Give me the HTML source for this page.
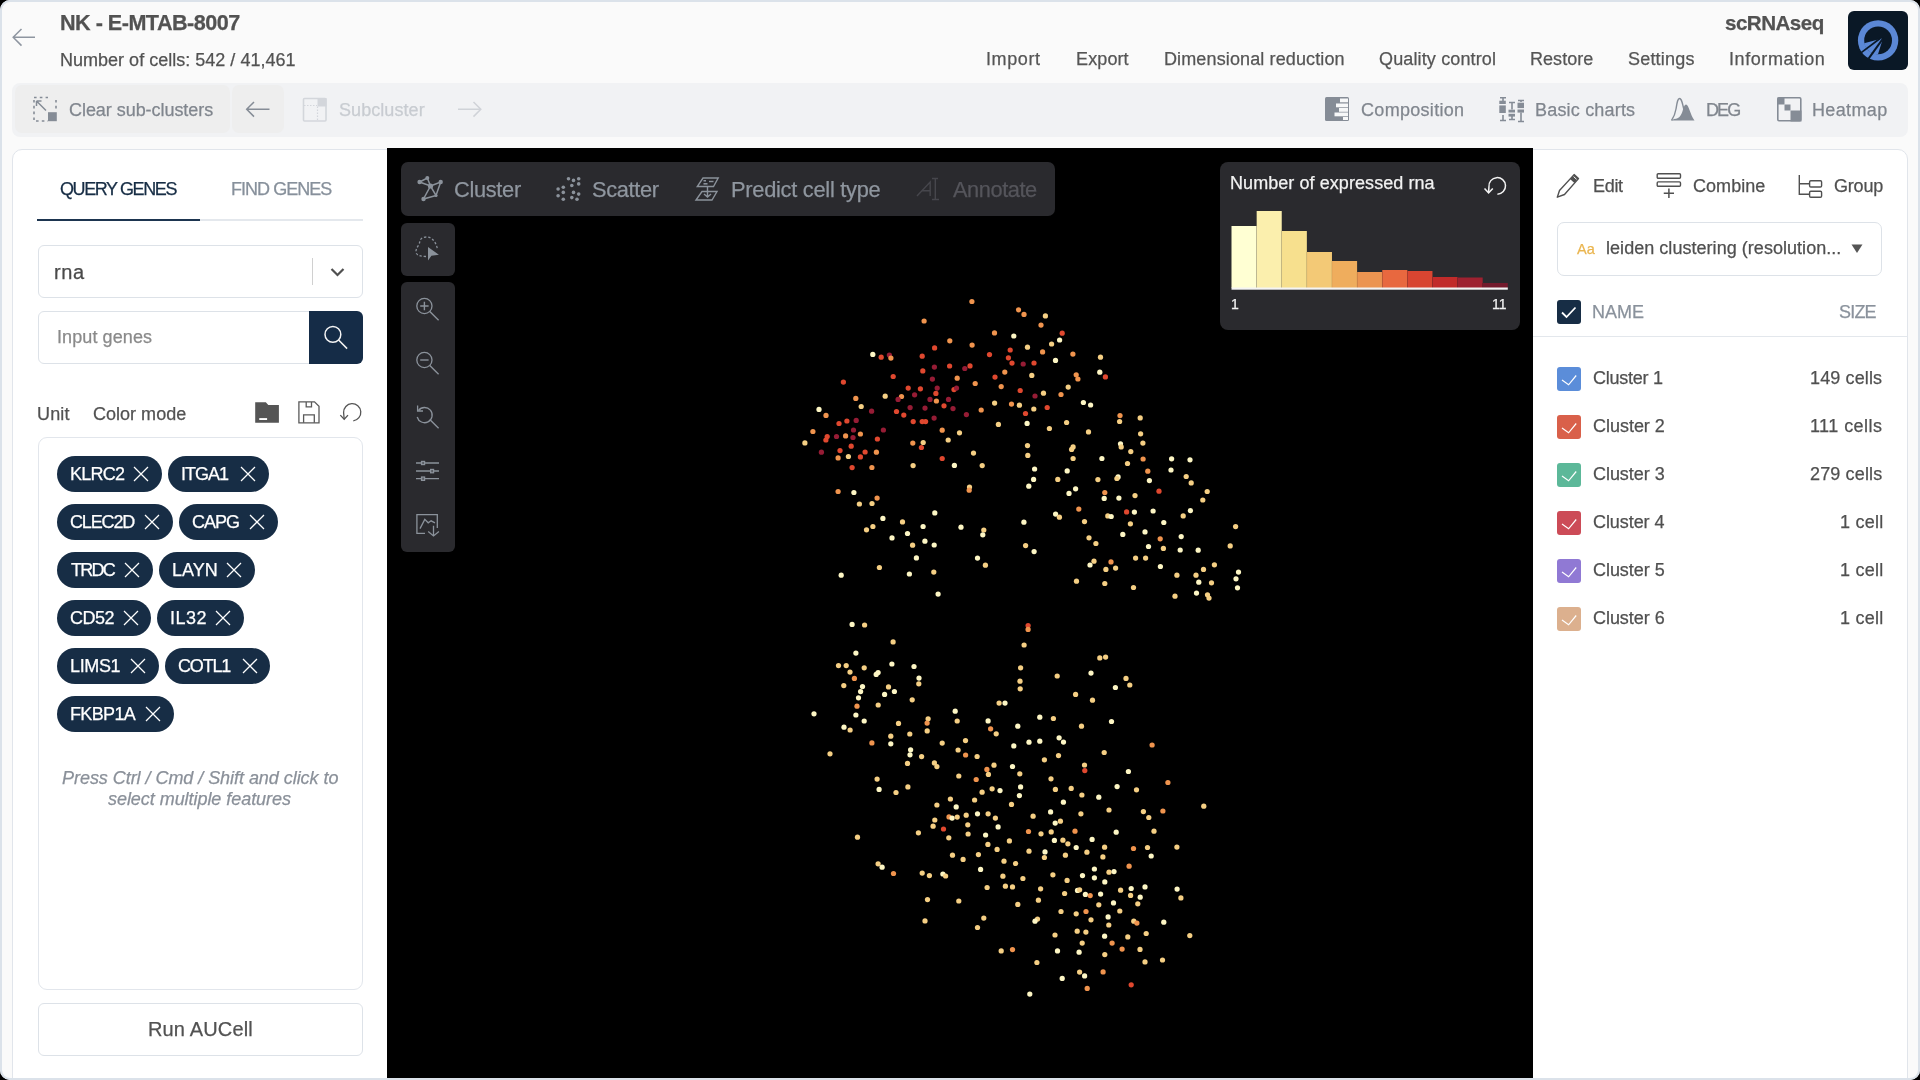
<!DOCTYPE html>
<html><head><meta charset="utf-8">
<style>
*{box-sizing:border-box;margin:0;padding:0}
html,body{width:1920px;height:1080px;overflow:hidden;background:#000}
body{font-family:"Liberation Sans",sans-serif;position:relative}
.abs{position:absolute}
.t{position:absolute;white-space:nowrap;line-height:1;will-change:transform;-webkit-text-stroke:0.25px currentColor}
svg{position:absolute;overflow:visible}
</style></head>
<body>
<div class="abs" style="left:0px;top:0px;width:1920px;height:1080px;background:#fafafa"></div>
<svg style="left:0px;top:0px;" width="60" height="80" viewBox="0 0 60 80"><path d="M35 37.3H13.5M21.5 29L13.2 37.3 21.5 45.6" fill="none" stroke="#8e95a0" stroke-width="1.5"/></svg>
<div class="t" style="left:59.50px;letter-spacing:-0.511px;top:11.82px;font-size:21.6px;color:#525252;font-weight:bold;font-style:normal;">NK - E-MTAB-8007</div>
<div class="t" style="left:60.16px;letter-spacing:0.013px;top:51.06px;font-size:18px;color:#525252;font-weight:normal;font-style:normal;">Number of cells: 542 / 41,461</div>
<div class="t" style="left:1725.28px;letter-spacing:-0.534px;top:12.56px;font-size:20.6px;color:#525252;font-weight:bold;font-style:normal;">scRNAseq</div>
<div class="t" style="left:986.18px;letter-spacing:0.594px;top:50.26px;font-size:18px;color:#555555;font-weight:normal;font-style:normal;">Import</div>
<div class="t" style="left:1075.56px;letter-spacing:0.120px;top:50.26px;font-size:18px;color:#555555;font-weight:normal;font-style:normal;">Export</div>
<div class="t" style="left:1163.56px;letter-spacing:0.125px;top:50.26px;font-size:18px;color:#555555;font-weight:normal;font-style:normal;">Dimensional reduction</div>
<div class="t" style="left:1379.19px;letter-spacing:0.140px;top:50.26px;font-size:18px;color:#555555;font-weight:normal;font-style:normal;">Quality control</div>
<div class="t" style="left:1530.06px;letter-spacing:0.042px;top:50.26px;font-size:18px;color:#555555;font-weight:normal;font-style:normal;">Restore</div>
<div class="t" style="left:1628.19px;letter-spacing:0.196px;top:50.26px;font-size:18px;color:#555555;font-weight:normal;font-style:normal;">Settings</div>
<div class="t" style="left:1728.88px;letter-spacing:0.579px;top:50.26px;font-size:18px;color:#555555;font-weight:normal;font-style:normal;">Information</div>
<div class="abs" style="left:1848px;top:10.5px;width:60px;height:59.8px;background:#0a1826;border-radius:6px"></div>
<svg style="left:1848px;top:10px;" width="60" height="60" viewBox="0 0 60 60"><circle cx="30.1" cy="30.4" r="20.2" fill="#5b88d6"/><circle cx="30.1" cy="30.4" r="13.9" fill="#0a1826"/><path d="M35 28.3L16.1 33.3A13.9 13.9 0 0 0 30 44.3Z" fill="#5b88d6"/><path d="M32 28.5L13.2 42.6" stroke="#0a1826" stroke-width="1.7"/><path d="M35.3 28.1L20.6 48.6" stroke="#0a1826" stroke-width="2"/></svg>
<div class="abs" style="left:12px;top:82.6px;width:1896px;height:54.20000000000002px;background:#f1f2f4;border-radius:8px"></div>
<div class="abs" style="left:15px;top:85px;width:215px;height:48px;background:#eeeeee;border-radius:7px"></div>
<div class="abs" style="left:232px;top:85px;width:52px;height:48px;background:#eeeeee;border-radius:7px"></div>
<svg style="left:33px;top:97px;" width="24" height="25" viewBox="0 0 24 25"><path d="M1 3V24M1 0.5H15M23 3V14M3 24H15" fill="none" stroke="#858c96" stroke-width="1.6" stroke-dasharray="2.6 3.2"/><rect x="15" y="15.2" width="8.8" height="9" fill="#858c96"/><path d="M3.5 4L13 13.5M3.5 4H8.5M3.5 4V9" fill="none" stroke="#858c96" stroke-width="1.5"/></svg>
<div class="t" style="left:69.00px;letter-spacing:-0.050px;top:100.66px;font-size:18px;color:#80868e;font-weight:normal;font-style:normal;">Clear sub-clusters</div>
<svg style="left:240px;top:95px;" width="40" height="30" viewBox="0 0 40 30"><path d="M29.5 14.3H7M14 7L6.7 14.3 14 21.6" fill="none" stroke="#858c96" stroke-width="1.5"/></svg>
<svg style="left:302px;top:97px;" width="26" height="25" viewBox="0 0 26 25"><rect x="1.5" y="1.5" width="22.5" height="22.5" rx="1" fill="none" stroke="#d3d6db" stroke-width="1.6"/><rect x="15.5" y="1" width="9" height="8.5" fill="#d3d6db"/><path d="M2 8.5H15M15.5 9.5V23" stroke="#d3d6db" stroke-width="1.2" stroke-dasharray="1.5 1.5"/></svg>
<div class="t" style="left:338.59px;letter-spacing:0.069px;top:100.66px;font-size:18px;color:#c8ccd1;font-weight:normal;font-style:normal;">Subcluster</div>
<svg style="left:450px;top:95px;" width="40" height="30" viewBox="0 0 40 30"><path d="M8 14.3H30.5M23.5 7L30.8 14.3 23.5 21.6" fill="none" stroke="#d0d3d8" stroke-width="1.5"/></svg>
<svg style="left:1325px;top:97px;" width="25" height="25" viewBox="0 0 25 25"><rect x="0" y="0" width="24" height="24" rx="1.5" fill="#858c96"/><rect x="15" y="1.5" width="8" height="3.8" fill="#f7f8f9"/><rect x="11" y="6.5" width="12" height="3.8" fill="#f7f8f9"/><rect x="14" y="11" width="9" height="3.8" fill="#f7f8f9"/><rect x="9.5" y="15.5" width="13.5" height="3.8" fill="#f7f8f9"/><rect x="18" y="20" width="5" height="3" fill="#f7f8f9"/></svg>
<div class="t" style="left:1361.10px;letter-spacing:0.308px;top:100.96px;font-size:18px;color:#80868e;font-weight:normal;font-style:normal;">Composition</div>
<svg style="left:1499px;top:96px;" width="26" height="27" viewBox="0 0 26 27"><g fill="#858c96" stroke="#858c96"><path d="M1 1.7H7M4 1.7V5.5M4 19V24.5M1 24.5H7M10 6.5H16M13 6.5V13.5M13 20V23.5M10 23.5H16M19 4.5H25M22 4.5V6M22 16.5V25.5M19 25.5H25" fill="none" stroke-width="1.6"/></g><rect x="0.3" y="4.7" width="6.5" height="3.3" fill="#858c96"/><rect x="0.3" y="9.4" width="6.5" height="7.6" fill="#858c96"/><rect x="9.5" y="13.7" width="6.5" height="2.8" fill="#858c96"/><rect x="9.5" y="17.8" width="6.5" height="2.8" fill="#858c96"/><rect x="18.5" y="6.7" width="6.5" height="5.4" fill="#858c96"/><rect x="18.5" y="13.5" width="6.5" height="3.1" fill="#858c96"/></svg>
<div class="t" style="left:1534.56px;letter-spacing:0.187px;top:100.96px;font-size:18px;color:#80868e;font-weight:normal;font-style:normal;">Basic charts</div>
<svg style="left:1671px;top:97px;" width="24" height="25" viewBox="0 0 24 25"><path d="M0.5 23.5C3 20 4 18 5 12C6 6 6.5 1.5 8.6 1.5C10.5 1.5 11.5 6 13 13" fill="none" stroke="#858c96" stroke-width="1.4"/><path d="M0.5 23.5H23.5C21 20 20 17 18.5 13C17.5 10 16.5 7.5 15 7.5C13.5 7.5 12.8 10.5 12 12.5C11 16 9.5 22 3 22Z" fill="#858c96"/></svg>
<div class="t" style="left:1706.06px;letter-spacing:-1.885px;top:100.96px;font-size:18px;color:#80868e;font-weight:normal;font-style:normal;">DEG</div>
<svg style="left:1777px;top:97px;" width="25" height="25" viewBox="0 0 25 25"><rect x="0.8" y="0.8" width="23" height="23" rx="1.2" fill="none" stroke="#858c96" stroke-width="1.6"/><rect x="0.5" y="0.5" width="7" height="7" fill="#858c96"/><rect x="7.5" y="7.5" width="6" height="6" fill="#858c96"/><rect x="13.5" y="13.5" width="11" height="11" fill="#858c96"/></svg>
<div class="t" style="left:1811.56px;letter-spacing:0.362px;top:100.96px;font-size:18px;color:#80868e;font-weight:normal;font-style:normal;">Heatmap</div>
<div class="abs" style="left:12px;top:149px;width:388px;height:941px;background:#fff;border:1px solid #e1e5eb;border-radius:10px"></div>
<div class="t" style="left:60.19px;letter-spacing:-1.399px;top:179.76px;font-size:18px;color:#172d45;font-weight:normal;font-style:normal;">QUERY GENES</div>
<div class="t" style="left:230.56px;letter-spacing:-0.970px;top:179.76px;font-size:18px;color:#87909b;font-weight:normal;font-style:normal;">FIND GENES</div>
<div class="abs" style="left:37px;top:219.2px;width:326px;height:1.6000000000000227px;background:#e4e8ed"></div>
<div class="abs" style="left:37px;top:218.8px;width:163px;height:2.0999999999999943px;background:#1d3550"></div>
<div class="abs" style="left:38px;top:245px;width:325px;height:53px;border:1px solid #dde2e8;border-radius:6px;background:#fff"></div>
<div class="t" style="left:53.60px;letter-spacing:0.550px;top:262.07px;font-size:20px;color:#4a4a4a;font-weight:normal;font-style:normal;">rna</div>
<div class="abs" style="left:312px;top:258px;width:1px;height:27px;background:#d0d0d0"></div>
<svg style="left:328px;top:264px;" width="20" height="16" viewBox="0 0 20 16"><path d="M3.5 5L9.5 11 15.5 5" fill="none" stroke="#505050" stroke-width="2.2"/></svg>
<div class="abs" style="left:38px;top:311px;width:282px;height:53px;border:1px solid #dde2e8;border-radius:6px;background:#fff"></div>
<div class="t" style="left:56.68px;letter-spacing:0.090px;top:328.36px;font-size:18px;color:#8a8a8a;font-weight:normal;font-style:normal;">Input genes</div>
<div class="abs" style="left:309px;top:311px;width:54px;height:53px;background:#152c47;border-radius:0 6px 6px 0"></div>
<svg style="left:320px;top:320px;" width="30" height="30" viewBox="0 0 30 30"><circle cx="12.9" cy="14.4" r="7.9" fill="none" stroke="#f4f4f4" stroke-width="1.5"/><path d="M18.6 20L27.1 28.6" stroke="#f4f4f4" stroke-width="1.5"/></svg>
<div class="t" style="left:36.65px;letter-spacing:0.130px;top:404.76px;font-size:18px;color:#525252;font-weight:normal;font-style:normal;">Unit</div>
<div class="t" style="left:93.10px;letter-spacing:0.017px;top:404.76px;font-size:18px;color:#525252;font-weight:normal;font-style:normal;">Color mode</div>
<svg style="left:248px;top:395px;" width="40" height="35" viewBox="0 0 40 35"><path d="M7.2 7.2H17.8L20.3 10H30.9V27.8H7.2Z" fill="#555"/><rect x="11.25" y="23.1" width="7.85" height="1.9" fill="#fff"/></svg>
<svg style="left:290px;top:395px;" width="40" height="35" viewBox="0 0 40 35"><path d="M8.9 6.9H24.5L29 11.3V27.8H8.9Z" fill="none" stroke="#5a5a5a" stroke-width="1.3"/><path d="M16.2 7V11.8H21.5V7M13.6 27.8V19.9H24.3V27.8" fill="none" stroke="#5a5a5a" stroke-width="1.3"/></svg>
<svg style="left:336px;top:395px;" width="30" height="35" viewBox="0 0 30 35"><path d="M17.3 25.8A8.6 8.6 0 1 0 7.6 17.5L8.2 24.2" fill="none" stroke="#555" stroke-width="1.3"/><path d="M4.3 20.1L8.2 24.3 12 20.1" fill="none" stroke="#555" stroke-width="1.3"/></svg>
<div class="abs" style="left:38px;top:437px;width:325px;height:553px;border:1px solid #e2e6ec;border-radius:9px"></div>
<div class="abs" style="left:57.1px;top:456.1px;width:104.70000000000002px;height:35.60000000000002px;background:#172d45;border-radius:18px"></div>
<div class="t" style="left:69.86px;letter-spacing:-0.777px;top:465.16px;font-size:18px;color:#ffffff;font-weight:normal;font-style:normal;">KLRC2</div>
<svg style="left:133.20000000000002px;top:466.0px;" width="16" height="16" viewBox="0 0 16 16"><path d="M1 1L15 15M15 1L1 15" stroke="#fff" stroke-width="1.25"/></svg>
<div class="abs" style="left:168px;top:456.1px;width:100.5px;height:35.60000000000002px;background:#172d45;border-radius:18px"></div>
<div class="t" style="left:180.58px;letter-spacing:-0.972px;top:465.16px;font-size:18px;color:#ffffff;font-weight:normal;font-style:normal;">ITGA1</div>
<svg style="left:239.9px;top:466.0px;" width="16" height="16" viewBox="0 0 16 16"><path d="M1 1L15 15M15 1L1 15" stroke="#fff" stroke-width="1.25"/></svg>
<div class="abs" style="left:57.1px;top:504.2px;width:115.80000000000001px;height:35.599999999999966px;background:#172d45;border-radius:18px"></div>
<div class="t" style="left:70.40px;letter-spacing:-1.140px;top:513.26px;font-size:18px;color:#ffffff;font-weight:normal;font-style:normal;">CLEC2D</div>
<svg style="left:144.3px;top:514.1px;" width="16" height="16" viewBox="0 0 16 16"><path d="M1 1L15 15M15 1L1 15" stroke="#fff" stroke-width="1.25"/></svg>
<div class="abs" style="left:179.1px;top:504.2px;width:98.50000000000003px;height:35.599999999999966px;background:#172d45;border-radius:18px"></div>
<div class="t" style="left:192.40px;letter-spacing:-1.027px;top:513.26px;font-size:18px;color:#ffffff;font-weight:normal;font-style:normal;">CAPG</div>
<svg style="left:249.0px;top:514.1px;" width="16" height="16" viewBox="0 0 16 16"><path d="M1 1L15 15M15 1L1 15" stroke="#fff" stroke-width="1.25"/></svg>
<div class="abs" style="left:57.1px;top:552.2px;width:95.70000000000002px;height:35.60000000000002px;background:#172d45;border-radius:18px"></div>
<div class="t" style="left:70.94px;letter-spacing:-1.720px;top:561.26px;font-size:18px;color:#ffffff;font-weight:normal;font-style:normal;">TRDC</div>
<svg style="left:124.20000000000002px;top:562.1px;" width="16" height="16" viewBox="0 0 16 16"><path d="M1 1L15 15M15 1L1 15" stroke="#fff" stroke-width="1.25"/></svg>
<div class="abs" style="left:159.3px;top:552.2px;width:95.6px;height:35.60000000000002px;background:#172d45;border-radius:18px"></div>
<div class="t" style="left:172.06px;letter-spacing:-0.017px;top:561.26px;font-size:18px;color:#ffffff;font-weight:normal;font-style:normal;">LAYN</div>
<svg style="left:226.3px;top:562.1px;" width="16" height="16" viewBox="0 0 16 16"><path d="M1 1L15 15M15 1L1 15" stroke="#fff" stroke-width="1.25"/></svg>
<div class="abs" style="left:57.1px;top:600.2px;width:94.4px;height:35.60000000000002px;background:#172d45;border-radius:18px"></div>
<div class="t" style="left:70.40px;letter-spacing:-0.530px;top:609.26px;font-size:18px;color:#ffffff;font-weight:normal;font-style:normal;">CD52</div>
<svg style="left:122.9px;top:610.1px;" width="16" height="16" viewBox="0 0 16 16"><path d="M1 1L15 15M15 1L1 15" stroke="#fff" stroke-width="1.25"/></svg>
<div class="abs" style="left:157.4px;top:600.2px;width:86.19999999999999px;height:35.60000000000002px;background:#172d45;border-radius:18px"></div>
<div class="t" style="left:169.98px;letter-spacing:0.503px;top:609.26px;font-size:18px;color:#ffffff;font-weight:normal;font-style:normal;">IL32</div>
<svg style="left:215.0px;top:610.1px;" width="16" height="16" viewBox="0 0 16 16"><path d="M1 1L15 15M15 1L1 15" stroke="#fff" stroke-width="1.25"/></svg>
<div class="abs" style="left:57.1px;top:648.2px;width:101.6px;height:35.60000000000002px;background:#172d45;border-radius:18px"></div>
<div class="t" style="left:69.86px;letter-spacing:-0.368px;top:657.26px;font-size:18px;color:#ffffff;font-weight:normal;font-style:normal;">LIMS1</div>
<svg style="left:130.1px;top:658.1px;" width="16" height="16" viewBox="0 0 16 16"><path d="M1 1L15 15M15 1L1 15" stroke="#fff" stroke-width="1.25"/></svg>
<div class="abs" style="left:165.1px;top:648.2px;width:105.29999999999998px;height:35.60000000000002px;background:#172d45;border-radius:18px"></div>
<div class="t" style="left:178.40px;letter-spacing:-1.162px;top:657.26px;font-size:18px;color:#ffffff;font-weight:normal;font-style:normal;">COTL1</div>
<svg style="left:241.79999999999998px;top:658.1px;" width="16" height="16" viewBox="0 0 16 16"><path d="M1 1L15 15M15 1L1 15" stroke="#fff" stroke-width="1.25"/></svg>
<div class="abs" style="left:57.1px;top:696.1px;width:116.70000000000002px;height:35.60000000000002px;background:#172d45;border-radius:18px"></div>
<div class="t" style="left:69.86px;letter-spacing:-0.658px;top:705.16px;font-size:18px;color:#ffffff;font-weight:normal;font-style:normal;">FKBP1A</div>
<svg style="left:145.20000000000002px;top:706.0px;" width="16" height="16" viewBox="0 0 16 16"><path d="M1 1L15 15M15 1L1 15" stroke="#fff" stroke-width="1.25"/></svg>
<div class="t" style="left:61.66px;letter-spacing:-0.045px;top:769.16px;font-size:18px;color:#8a9099;font-weight:normal;font-style:italic;">Press Ctrl / Cmd / Shift and click to</div>
<div class="t" style="left:108.41px;letter-spacing:-0.048px;top:789.96px;font-size:18px;color:#8a9099;font-weight:normal;font-style:italic;">select multiple features</div>
<div class="abs" style="left:38px;top:1002.5px;width:325px;height:53.0px;border:1px solid #dde2e8;border-radius:6px"></div>
<div class="t" style="left:148.20px;letter-spacing:0.144px;top:1019.47px;font-size:20px;color:#525252;font-weight:normal;font-style:normal;">Run AUCell</div>
<div class="abs" style="left:1520px;top:149px;width:388px;height:941px;background:#fff;border:1px solid #e1e5eb;border-radius:10px"></div>
<svg style="left:1556px;top:173px;" width="26" height="26" viewBox="0 0 26 26"><path d="M18.1 1.6L22.5 5.6 8.5 21.5 1.3 24.2 3.5 17.5Z" fill="none" stroke="#505050" stroke-width="1.4" stroke-linejoin="round"/><path d="M18.1 1.6L22.5 5.6 18.4 10 14 6Z" fill="#505050"/><path d="M17.6 3.6L20.6 6.3" stroke="#fff" stroke-width="1"/></svg>
<div class="t" style="left:1593.36px;letter-spacing:-0.310px;top:177.06px;font-size:18px;color:#505050;font-weight:normal;font-style:normal;">Edit</div>
<svg style="left:1656px;top:173px;" width="26" height="26" viewBox="0 0 26 26"><rect x="1.2" y="0.8" width="23.3" height="4.4" rx="1" fill="none" stroke="#505050" stroke-width="1.4"/><rect x="1.2" y="8.9" width="23.3" height="4.3" rx="1" fill="none" stroke="#505050" stroke-width="1.4"/><path d="M12.9 15.4V24.9M7.75 20.3H18" stroke="#505050" stroke-width="1.5"/></svg>
<div class="t" style="left:1692.50px;letter-spacing:0.052px;top:177.06px;font-size:18px;color:#505050;font-weight:normal;font-style:normal;">Combine</div>
<svg style="left:1798px;top:173px;" width="26" height="26" viewBox="0 0 26 26"><path d="M1.3 2V21.2H11.6M1.3 10.75H11.6" fill="none" stroke="#505050" stroke-width="1.4"/><rect x="11.6" y="7.8" width="12" height="6.2" rx="1.2" fill="none" stroke="#505050" stroke-width="1.4"/><rect x="11.6" y="18.3" width="12" height="5.9" rx="1.2" fill="none" stroke="#505050" stroke-width="1.4"/></svg>
<div class="t" style="left:1833.50px;letter-spacing:-0.205px;top:177.06px;font-size:18px;color:#505050;font-weight:normal;font-style:normal;">Group</div>
<div class="abs" style="left:1557px;top:222px;width:325px;height:54px;border:1px solid #dde2e8;border-radius:7px"></div>
<div class="t" style="left:1577.00px;top:242.43px;font-size:14.5px;color:#eab54f;font-weight:normal;font-style:normal;">Aa</div>
<div class="t" style="left:1605.83px;letter-spacing:0.039px;top:239.46px;font-size:18px;color:#505050;font-weight:normal;font-style:normal;">leiden clustering (resolution...</div>
<svg style="left:1850px;top:243px;" width="14" height="12" viewBox="0 0 14 12"><path d="M1.5 1.5H12.5L7 10Z" fill="#555"/></svg>
<div class="abs" style="left:1557px;top:300px;width:24px;height:24px;background:#172d45;border-radius:3px"></div>
<svg style="left:1557px;top:300px;" width="24" height="24" viewBox="0 0 24 24"><path d="M5 12.5L9.5 17 18.5 7.5" fill="none" stroke="#fff" stroke-width="1.8"/></svg>
<div class="t" style="left:1592.36px;letter-spacing:-0.023px;top:302.76px;font-size:18px;color:#8a929c;font-weight:normal;font-style:normal;">NAME</div>
<div class="t" style="left:1839.19px;letter-spacing:-0.810px;top:302.76px;font-size:18px;color:#8a929c;font-weight:normal;font-style:normal;">SIZE</div>
<div class="abs" style="left:1533px;top:336px;width:374px;height:1px;background:#e3e7ec"></div>
<div class="abs" style="left:1557px;top:367.4px;width:24px;height:24.0px;background:#5b8dd9;border-radius:3px"></div>
<svg style="left:1557px;top:367.4px;" width="24" height="24" viewBox="0 0 24 24"><path d="M5 13L11.6 17.8 19.2 8.5" fill="none" stroke="#fff" stroke-width="1.2"/></svg>
<div class="t" style="left:1592.80px;letter-spacing:-0.261px;top:368.76px;font-size:18px;color:#505050;font-weight:normal;font-style:normal;">Cluster 1</div>
<div class="t" style="left:1810.35px;letter-spacing:0.121px;top:368.76px;font-size:18px;color:#505050;font-weight:normal;font-style:normal;">149 cells</div>
<div class="abs" style="left:1557px;top:415.4px;width:24px;height:24.0px;background:#d9604a;border-radius:3px"></div>
<svg style="left:1557px;top:415.4px;" width="24" height="24" viewBox="0 0 24 24"><path d="M5 13L11.6 17.8 19.2 8.5" fill="none" stroke="#fff" stroke-width="1.2"/></svg>
<div class="t" style="left:1592.80px;letter-spacing:-0.025px;top:416.76px;font-size:18px;color:#505050;font-weight:normal;font-style:normal;">Cluster 2</div>
<div class="t" style="left:1810.35px;letter-spacing:0.447px;top:416.76px;font-size:18px;color:#505050;font-weight:normal;font-style:normal;">111 cells</div>
<div class="abs" style="left:1557px;top:463.4px;width:24px;height:24.0px;background:#5cb899;border-radius:3px"></div>
<svg style="left:1557px;top:463.4px;" width="24" height="24" viewBox="0 0 24 24"><path d="M5 13L11.6 17.8 19.2 8.5" fill="none" stroke="#fff" stroke-width="1.2"/></svg>
<div class="t" style="left:1592.80px;letter-spacing:-0.047px;top:464.76px;font-size:18px;color:#505050;font-weight:normal;font-style:normal;">Cluster 3</div>
<div class="t" style="left:1810.20px;letter-spacing:0.140px;top:464.76px;font-size:18px;color:#505050;font-weight:normal;font-style:normal;">279 cells</div>
<div class="abs" style="left:1557px;top:511.4px;width:24px;height:24.0px;background:#cc4b57;border-radius:3px"></div>
<svg style="left:1557px;top:511.4px;" width="24" height="24" viewBox="0 0 24 24"><path d="M5 13L11.6 17.8 19.2 8.5" fill="none" stroke="#fff" stroke-width="1.2"/></svg>
<div class="t" style="left:1592.80px;letter-spacing:-0.070px;top:512.76px;font-size:18px;color:#505050;font-weight:normal;font-style:normal;">Cluster 4</div>
<div class="t" style="left:1839.65px;letter-spacing:0.256px;top:512.76px;font-size:18px;color:#505050;font-weight:normal;font-style:normal;">1 cell</div>
<div class="abs" style="left:1557px;top:559.4px;width:24px;height:24.0px;background:#9079d4;border-radius:3px"></div>
<svg style="left:1557px;top:559.4px;" width="24" height="24" viewBox="0 0 24 24"><path d="M5 13L11.6 17.8 19.2 8.5" fill="none" stroke="#fff" stroke-width="1.2"/></svg>
<div class="t" style="left:1592.80px;letter-spacing:-0.047px;top:560.76px;font-size:18px;color:#505050;font-weight:normal;font-style:normal;">Cluster 5</div>
<div class="t" style="left:1839.65px;letter-spacing:0.256px;top:560.76px;font-size:18px;color:#505050;font-weight:normal;font-style:normal;">1 cell</div>
<div class="abs" style="left:1557px;top:607.4px;width:24px;height:24.0px;background:#dcb08e;border-radius:3px"></div>
<svg style="left:1557px;top:607.4px;" width="24" height="24" viewBox="0 0 24 24"><path d="M5 13L11.6 17.8 19.2 8.5" fill="none" stroke="#fff" stroke-width="1.2"/></svg>
<div class="t" style="left:1592.80px;letter-spacing:-0.047px;top:608.76px;font-size:18px;color:#505050;font-weight:normal;font-style:normal;">Cluster 6</div>
<div class="t" style="left:1839.65px;letter-spacing:0.256px;top:608.76px;font-size:18px;color:#505050;font-weight:normal;font-style:normal;">1 cell</div>
<div class="abs" style="left:387px;top:148px;width:1146px;height:930px;background:#000"></div>
<svg style="left:387px;top:148px;" width="1146" height="930" viewBox="0 0 1146 930"><circle cx="584.9" cy="153.5" r="2.62" fill="#f0944e"/><circle cx="631.5" cy="161.8" r="2.62" fill="#f0944e"/><circle cx="637.0" cy="166.4" r="2.62" fill="#f0944e"/><circle cx="537.1" cy="173.0" r="2.62" fill="#f0944e"/><circle cx="607.5" cy="184.9" r="2.62" fill="#f0944e"/><circle cx="626.8" cy="188.0" r="2.62" fill="#fdf6c4"/><circle cx="562.8" cy="192.8" r="2.62" fill="#f0944e"/><circle cx="585.1" cy="197.1" r="2.62" fill="#f0944e"/><circle cx="640.5" cy="199.2" r="2.62" fill="#f5cf84"/><circle cx="547.6" cy="199.9" r="2.62" fill="#e0482f"/><circle cx="623.2" cy="202.0" r="2.62" fill="#e0482f"/><circle cx="485.8" cy="206.4" r="2.62" fill="#fdf6c4"/><circle cx="494.2" cy="209.2" r="2.62" fill="#e0482f"/><circle cx="502.4" cy="207.0" r="2.62" fill="#961c35"/><circle cx="503.9" cy="210.1" r="2.62" fill="#f0944e"/><circle cx="535.2" cy="208.2" r="2.62" fill="#e0482f"/><circle cx="602.5" cy="206.6" r="2.62" fill="#e0482f"/><circle cx="621.4" cy="209.8" r="2.62" fill="#e0482f"/><circle cx="625.0" cy="215.1" r="2.62" fill="#e0482f"/><circle cx="636.2" cy="216.0" r="2.62" fill="#961c35"/><circle cx="547.4" cy="219.1" r="2.62" fill="#961c35"/><circle cx="562.6" cy="218.0" r="2.62" fill="#e0482f"/><circle cx="577.8" cy="220.5" r="2.62" fill="#961c35"/><circle cx="583.0" cy="217.9" r="2.62" fill="#e0482f"/><circle cx="535.8" cy="222.9" r="2.62" fill="#e0482f"/><circle cx="617.8" cy="224.1" r="2.62" fill="#f0944e"/><circle cx="506.2" cy="228.5" r="2.62" fill="#e0482f"/><circle cx="545.4" cy="231.1" r="2.62" fill="#961c35"/><circle cx="570.2" cy="230.2" r="2.62" fill="#f0944e"/><circle cx="608.0" cy="229.1" r="2.62" fill="#e0482f"/><circle cx="588.2" cy="235.5" r="2.62" fill="#f0944e"/><circle cx="614.2" cy="238.6" r="2.62" fill="#f0944e"/><circle cx="456.4" cy="234.1" r="2.62" fill="#e0482f"/><circle cx="521.2" cy="240.1" r="2.62" fill="#e0482f"/><circle cx="533.4" cy="240.8" r="2.62" fill="#e0482f"/><circle cx="550.2" cy="240.1" r="2.62" fill="#961c35"/><circle cx="567.0" cy="241.6" r="2.62" fill="#e0482f"/><circle cx="569.5" cy="240.1" r="2.62" fill="#961c35"/><circle cx="633.2" cy="242.5" r="2.62" fill="#e0482f"/><circle cx="527.6" cy="246.8" r="2.62" fill="#961c35"/><circle cx="548.9" cy="245.4" r="2.62" fill="#e0482f"/><circle cx="514.5" cy="248.5" r="2.62" fill="#f0944e"/><circle cx="511.1" cy="251.4" r="2.62" fill="#961c35"/><circle cx="498.2" cy="248.2" r="2.62" fill="#f5cf84"/><circle cx="468.8" cy="250.4" r="2.62" fill="#f0944e"/><circle cx="543.0" cy="251.4" r="2.62" fill="#961c35"/><circle cx="561.5" cy="251.4" r="2.62" fill="#961c35"/><circle cx="549.4" cy="253.0" r="2.62" fill="#f0944e"/><circle cx="607.6" cy="255.1" r="2.62" fill="#f5cf84"/><circle cx="624.5" cy="256.1" r="2.62" fill="#f0944e"/><circle cx="632.4" cy="257.2" r="2.62" fill="#f5cf84"/><circle cx="474.2" cy="258.5" r="2.62" fill="#f5cf84"/><circle cx="432.0" cy="261.4" r="2.62" fill="#fdf6c4"/><circle cx="439.0" cy="267.4" r="2.62" fill="#f0944e"/><circle cx="484.6" cy="263.2" r="2.62" fill="#961c35"/><circle cx="523.1" cy="259.6" r="2.62" fill="#961c35"/><circle cx="538.0" cy="260.1" r="2.62" fill="#961c35"/><circle cx="557.0" cy="257.8" r="2.62" fill="#e0482f"/><circle cx="566.0" cy="260.6" r="2.62" fill="#961c35"/><circle cx="594.2" cy="262.0" r="2.62" fill="#f0944e"/><circle cx="509.5" cy="263.5" r="2.62" fill="#e0482f"/><circle cx="516.8" cy="267.1" r="2.62" fill="#e0482f"/><circle cx="579.4" cy="266.6" r="2.62" fill="#961c35"/><circle cx="638.5" cy="265.5" r="2.62" fill="#e0482f"/><circle cx="459.9" cy="273.0" r="2.62" fill="#e0482f"/><circle cx="469.2" cy="272.4" r="2.62" fill="#961c35"/><circle cx="452.0" cy="275.5" r="2.62" fill="#e0482f"/><circle cx="526.2" cy="273.6" r="2.62" fill="#e0482f"/><circle cx="535.2" cy="273.6" r="2.62" fill="#e0482f"/><circle cx="538.6" cy="273.6" r="2.62" fill="#e0482f"/><circle cx="547.1" cy="270.1" r="2.62" fill="#961c35"/><circle cx="640.1" cy="275.4" r="2.62" fill="#fdf6c4"/><circle cx="611.4" cy="276.4" r="2.62" fill="#f5cf84"/><circle cx="654.0" cy="685.8" r="2.62" fill="#f5cf84"/><circle cx="664.2" cy="683.9" r="2.62" fill="#f5cf84"/><circle cx="688.0" cy="683.2" r="2.62" fill="#f0944e"/><circle cx="729.2" cy="684.2" r="2.62" fill="#fdf6c4"/><circle cx="767.0" cy="683.2" r="2.62" fill="#f5cf84"/><circle cx="667.4" cy="692.4" r="2.62" fill="#fdf6c4"/><circle cx="675.9" cy="692.2" r="2.62" fill="#f5cf84"/><circle cx="680.9" cy="695.8" r="2.62" fill="#f5cf84"/><circle cx="705.1" cy="691.4" r="2.62" fill="#fdf6c4"/><circle cx="689.2" cy="699.5" r="2.62" fill="#fdf6c4"/><circle cx="717.6" cy="699.2" r="2.62" fill="#f5cf84"/><circle cx="746.5" cy="700.5" r="2.62" fill="#f0944e"/><circle cx="760.5" cy="699.5" r="2.62" fill="#f5cf84"/><circle cx="789.9" cy="699.1" r="2.62" fill="#f5cf84"/><circle cx="658.0" cy="703.9" r="2.62" fill="#fdf6c4"/><circle cx="657.4" cy="709.5" r="2.62" fill="#f5cf84"/><circle cx="678.4" cy="707.2" r="2.62" fill="#f5cf84"/><circle cx="699.9" cy="704.2" r="2.62" fill="#f5cf84"/><circle cx="715.9" cy="708.9" r="2.62" fill="#f5cf84"/><circle cx="764.2" cy="708.0" r="2.62" fill="#fdf6c4"/><circle cx="742.1" cy="718.2" r="2.62" fill="#f0944e"/><circle cx="707.4" cy="721.0" r="2.62" fill="#fdf6c4"/><circle cx="722.0" cy="724.2" r="2.62" fill="#f5cf84"/><circle cx="727.0" cy="723.6" r="2.62" fill="#fdf6c4"/><circle cx="665.9" cy="726.8" r="2.62" fill="#f5cf84"/><circle cx="695.5" cy="727.6" r="2.62" fill="#fdf6c4"/><circle cx="707.4" cy="729.8" r="2.62" fill="#fdf6c4"/><circle cx="717.8" cy="733.9" r="2.62" fill="#fdf6c4"/><circle cx="680.1" cy="732.4" r="2.62" fill="#f5cf84"/><circle cx="653.6" cy="740.8" r="2.62" fill="#f5cf84"/><circle cx="690.5" cy="742.4" r="2.62" fill="#fdf6c4"/><circle cx="692.6" cy="741.8" r="2.62" fill="#f5cf84"/><circle cx="677.6" cy="745.5" r="2.62" fill="#f5cf84"/><circle cx="698.4" cy="746.4" r="2.62" fill="#fdf6c4"/><circle cx="703.2" cy="747.6" r="2.62" fill="#f0944e"/><circle cx="713.6" cy="746.1" r="2.62" fill="#fdf6c4"/><circle cx="733.6" cy="742.2" r="2.62" fill="#f5cf84"/><circle cx="744.2" cy="740.5" r="2.62" fill="#fdf6c4"/><circle cx="758.0" cy="738.9" r="2.62" fill="#fdf6c4"/><circle cx="790.1" cy="741.1" r="2.62" fill="#fdf6c4"/><circle cx="743.6" cy="747.4" r="2.62" fill="#f5cf84"/><circle cx="753.2" cy="749.2" r="2.62" fill="#fdf6c4"/><circle cx="793.9" cy="749.9" r="2.62" fill="#f5cf84"/><circle cx="651.4" cy="752.2" r="2.62" fill="#f5cf84"/><circle cx="711.8" cy="756.8" r="2.62" fill="#f5cf84"/><circle cx="726.5" cy="754.9" r="2.62" fill="#fdf6c4"/><circle cx="750.8" cy="755.8" r="2.62" fill="#f5cf84"/><circle cx="674.0" cy="763.5" r="2.62" fill="#f5cf84"/><circle cx="689.2" cy="765.8" r="2.62" fill="#f5cf84"/><circle cx="699.0" cy="763.5" r="2.62" fill="#f0944e"/><circle cx="732.8" cy="763.0" r="2.62" fill="#f5cf84"/><circle cx="721.1" cy="768.9" r="2.62" fill="#fdf6c4"/><circle cx="704.0" cy="771.8" r="2.62" fill="#f5cf84"/><circle cx="650.5" cy="771.1" r="2.62" fill="#f5cf84"/><circle cx="648.0" cy="773.2" r="2.62" fill="#fdf6c4"/><circle cx="746.8" cy="773.2" r="2.62" fill="#f5cf84"/><circle cx="749.9" cy="775.1" r="2.62" fill="#f0944e"/><circle cx="776.8" cy="774.2" r="2.62" fill="#fdf6c4"/><circle cx="721.8" cy="777.0" r="2.62" fill="#f5cf84"/><circle cx="690.2" cy="783.2" r="2.62" fill="#f5cf84"/><circle cx="698.9" cy="784.1" r="2.62" fill="#f5cf84"/><circle cx="668.0" cy="787.0" r="2.62" fill="#f5cf84"/><circle cx="717.6" cy="788.2" r="2.62" fill="#fdf6c4"/><circle cx="740.8" cy="788.9" r="2.62" fill="#f5cf84"/><circle cx="759.2" cy="785.5" r="2.62" fill="#f5cf84"/><circle cx="802.8" cy="787.6" r="2.62" fill="#f5cf84"/><circle cx="695.2" cy="795.1" r="2.62" fill="#f5cf84"/><circle cx="725.1" cy="795.1" r="2.62" fill="#f0944e"/><circle cx="735.1" cy="801.1" r="2.62" fill="#f0944e"/><circle cx="753.0" cy="801.4" r="2.62" fill="#f5cf84"/><circle cx="670.5" cy="802.9" r="2.62" fill="#fdf6c4"/><circle cx="692.1" cy="804.2" r="2.62" fill="#fdf6c4"/><circle cx="717.8" cy="806.6" r="2.62" fill="#f5cf84"/><circle cx="649.9" cy="814.5" r="2.62" fill="#f5cf84"/><circle cx="758.0" cy="813.9" r="2.62" fill="#f5cf84"/><circle cx="775.5" cy="812.0" r="2.62" fill="#f5cf84"/><circle cx="642.8" cy="846.1" r="2.62" fill="#fdf6c4"/><circle cx="692.6" cy="824.1" r="2.62" fill="#f5cf84"/><circle cx="697.6" cy="827.9" r="2.62" fill="#fdf6c4"/><circle cx="675.2" cy="830.4" r="2.62" fill="#fdf6c4"/><circle cx="716.1" cy="823.9" r="2.62" fill="#f0944e"/><circle cx="700.2" cy="840.4" r="2.62" fill="#f0944e"/><circle cx="744.2" cy="836.8" r="2.62" fill="#e0482f"/><circle cx="658.4" cy="167.9" r="2.62" fill="#f5cf84"/><circle cx="654.0" cy="177.1" r="2.62" fill="#f0944e"/><circle cx="675.2" cy="185.2" r="2.62" fill="#e0482f"/><circle cx="672.6" cy="192.0" r="2.62" fill="#fdf6c4"/><circle cx="664.6" cy="196.0" r="2.62" fill="#f5cf84"/><circle cx="655.6" cy="203.9" r="2.62" fill="#f0944e"/><circle cx="685.9" cy="206.1" r="2.62" fill="#f0944e"/><circle cx="713.5" cy="209.2" r="2.62" fill="#f5cf84"/><circle cx="668.5" cy="212.4" r="2.62" fill="#fdf6c4"/><circle cx="647.0" cy="215.0" r="2.62" fill="#e0482f"/><circle cx="644.8" cy="227.4" r="2.62" fill="#f5cf84"/><circle cx="689.2" cy="226.8" r="2.62" fill="#f0944e"/><circle cx="690.9" cy="231.0" r="2.62" fill="#f0944e"/><circle cx="712.8" cy="224.2" r="2.62" fill="#fdf6c4"/><circle cx="718.4" cy="228.9" r="2.62" fill="#e0482f"/><circle cx="681.2" cy="239.1" r="2.62" fill="#f5cf84"/><circle cx="648.0" cy="248.0" r="2.62" fill="#961c35"/><circle cx="656.5" cy="245.2" r="2.62" fill="#f5cf84"/><circle cx="674.0" cy="246.5" r="2.62" fill="#f0944e"/><circle cx="696.4" cy="254.5" r="2.62" fill="#fdf6c4"/><circle cx="703.6" cy="257.0" r="2.62" fill="#fdf6c4"/><circle cx="646.8" cy="261.0" r="2.62" fill="#f5cf84"/><circle cx="660.2" cy="259.5" r="2.62" fill="#e0482f"/><circle cx="733.0" cy="267.6" r="2.62" fill="#f0944e"/><circle cx="753.2" cy="269.9" r="2.62" fill="#f5cf84"/><circle cx="732.6" cy="273.5" r="2.62" fill="#f5cf84"/><circle cx="679.6" cy="274.5" r="2.62" fill="#f5cf84"/><circle cx="425.9" cy="283.5" r="2.62" fill="#f0944e"/><circle cx="466.5" cy="282.0" r="2.62" fill="#961c35"/><circle cx="496.4" cy="282.0" r="2.62" fill="#961c35"/><circle cx="440.2" cy="288.5" r="2.62" fill="#e0482f"/><circle cx="438.9" cy="292.0" r="2.62" fill="#e0482f"/><circle cx="449.5" cy="288.5" r="2.62" fill="#961c35"/><circle cx="458.6" cy="287.9" r="2.62" fill="#f0944e"/><circle cx="473.4" cy="286.0" r="2.62" fill="#f0944e"/><circle cx="466.0" cy="289.5" r="2.62" fill="#961c35"/><circle cx="490.4" cy="291.0" r="2.62" fill="#e0482f"/><circle cx="417.9" cy="294.9" r="2.62" fill="#f5cf84"/><circle cx="464.2" cy="298.2" r="2.62" fill="#e0482f"/><circle cx="453.0" cy="302.6" r="2.62" fill="#e0482f"/><circle cx="434.4" cy="304.2" r="2.62" fill="#961c35"/><circle cx="478.1" cy="304.0" r="2.62" fill="#e0482f"/><circle cx="489.4" cy="304.2" r="2.62" fill="#f0944e"/><circle cx="451.1" cy="309.9" r="2.62" fill="#f0944e"/><circle cx="461.4" cy="308.5" r="2.62" fill="#f5cf84"/><circle cx="473.4" cy="308.9" r="2.62" fill="#e0482f"/><circle cx="465.1" cy="319.6" r="2.62" fill="#e0482f"/><circle cx="484.9" cy="319.5" r="2.62" fill="#f0944e"/><circle cx="525.8" cy="295.1" r="2.62" fill="#f0944e"/><circle cx="536.2" cy="294.5" r="2.62" fill="#f5cf84"/><circle cx="534.4" cy="299.5" r="2.62" fill="#e0482f"/><circle cx="555.2" cy="282.2" r="2.62" fill="#f0944e"/><circle cx="572.5" cy="284.8" r="2.62" fill="#f5cf84"/><circle cx="561.2" cy="292.0" r="2.62" fill="#f5cf84"/><circle cx="586.5" cy="305.1" r="2.62" fill="#f5cf84"/><circle cx="555.2" cy="310.5" r="2.62" fill="#e0482f"/><circle cx="526.1" cy="317.6" r="2.62" fill="#f5cf84"/><circle cx="567.4" cy="317.4" r="2.62" fill="#fdf6c4"/><circle cx="595.2" cy="317.6" r="2.62" fill="#f5cf84"/><circle cx="640.5" cy="297.6" r="2.62" fill="#f5cf84"/><circle cx="640.8" cy="307.4" r="2.62" fill="#f5cf84"/><circle cx="451.1" cy="343.5" r="2.62" fill="#f0944e"/><circle cx="466.9" cy="344.5" r="2.62" fill="#fdf6c4"/><circle cx="490.1" cy="350.1" r="2.62" fill="#f0944e"/><circle cx="472.4" cy="356.0" r="2.62" fill="#f5cf84"/><circle cx="485.0" cy="355.5" r="2.62" fill="#f5cf84"/><circle cx="582.5" cy="339.1" r="2.62" fill="#f5cf84"/><circle cx="582.2" cy="342.2" r="2.62" fill="#f0944e"/><circle cx="641.8" cy="338.2" r="2.62" fill="#fdf6c4"/><circle cx="547.8" cy="364.9" r="2.62" fill="#fdf6c4"/><circle cx="495.9" cy="370.4" r="2.62" fill="#fdf6c4"/><circle cx="515.5" cy="373.9" r="2.62" fill="#f5cf84"/><circle cx="485.9" cy="378.5" r="2.62" fill="#f5cf84"/><circle cx="479.5" cy="381.8" r="2.62" fill="#f5cf84"/><circle cx="536.1" cy="378.5" r="2.62" fill="#fdf6c4"/><circle cx="520.5" cy="385.5" r="2.62" fill="#fdf6c4"/><circle cx="505.0" cy="389.9" r="2.62" fill="#fdf6c4"/><circle cx="537.9" cy="393.2" r="2.62" fill="#fdf6c4"/><circle cx="525.6" cy="397.2" r="2.62" fill="#f5cf84"/><circle cx="547.2" cy="397.0" r="2.62" fill="#fdf6c4"/><circle cx="574.0" cy="379.2" r="2.62" fill="#fdf6c4"/><circle cx="596.8" cy="382.0" r="2.62" fill="#f5cf84"/><circle cx="595.8" cy="386.8" r="2.62" fill="#fdf6c4"/><circle cx="636.9" cy="374.2" r="2.62" fill="#fdf6c4"/><circle cx="638.6" cy="397.6" r="2.62" fill="#f5cf84"/><circle cx="529.4" cy="409.9" r="2.62" fill="#fdf6c4"/><circle cx="590.5" cy="410.1" r="2.62" fill="#fdf6c4"/><circle cx="662.4" cy="280.5" r="2.62" fill="#f5cf84"/><circle cx="701.5" cy="283.9" r="2.62" fill="#f5cf84"/><circle cx="753.6" cy="285.8" r="2.62" fill="#f5cf84"/><circle cx="755.9" cy="295.1" r="2.62" fill="#f5cf84"/><circle cx="733.5" cy="295.8" r="2.62" fill="#fdf6c4"/><circle cx="734.2" cy="298.9" r="2.62" fill="#f5cf84"/><circle cx="686.1" cy="298.9" r="2.62" fill="#f5cf84"/><circle cx="684.6" cy="301.4" r="2.62" fill="#f5cf84"/><circle cx="743.8" cy="303.6" r="2.62" fill="#f5cf84"/><circle cx="686.1" cy="310.5" r="2.62" fill="#f5cf84"/><circle cx="714.9" cy="310.5" r="2.62" fill="#fdf6c4"/><circle cx="756.1" cy="311.0" r="2.62" fill="#f0944e"/><circle cx="740.5" cy="315.5" r="2.62" fill="#f5cf84"/><circle cx="784.6" cy="310.8" r="2.62" fill="#fdf6c4"/><circle cx="803.0" cy="311.8" r="2.62" fill="#fdf6c4"/><circle cx="647.6" cy="321.0" r="2.62" fill="#fdf6c4"/><circle cx="680.2" cy="322.9" r="2.62" fill="#fdf6c4"/><circle cx="760.8" cy="323.2" r="2.62" fill="#f0944e"/><circle cx="784.0" cy="322.0" r="2.62" fill="#fdf6c4"/><circle cx="646.6" cy="331.4" r="2.62" fill="#fdf6c4"/><circle cx="670.8" cy="331.4" r="2.62" fill="#f5cf84"/><circle cx="710.9" cy="331.6" r="2.62" fill="#f5cf84"/><circle cx="731.1" cy="328.9" r="2.62" fill="#fdf6c4"/><circle cx="729.9" cy="330.5" r="2.62" fill="#f5cf84"/><circle cx="762.4" cy="332.6" r="2.62" fill="#fdf6c4"/><circle cx="799.2" cy="328.5" r="2.62" fill="#f5cf84"/><circle cx="804.2" cy="334.9" r="2.62" fill="#f5cf84"/><circle cx="688.6" cy="340.8" r="2.62" fill="#fdf6c4"/><circle cx="682.0" cy="345.4" r="2.62" fill="#fdf6c4"/><circle cx="717.8" cy="344.5" r="2.62" fill="#f0944e"/><circle cx="717.2" cy="350.4" r="2.62" fill="#fdf6c4"/><circle cx="731.9" cy="350.1" r="2.62" fill="#fdf6c4"/><circle cx="748.0" cy="347.6" r="2.62" fill="#f5cf84"/><circle cx="772.0" cy="343.2" r="2.62" fill="#e0482f"/><circle cx="820.2" cy="343.5" r="2.62" fill="#f5cf84"/><circle cx="815.8" cy="352.0" r="2.62" fill="#f5cf84"/><circle cx="691.8" cy="361.1" r="2.62" fill="#f0944e"/><circle cx="668.6" cy="366.1" r="2.62" fill="#fdf6c4"/><circle cx="672.4" cy="369.2" r="2.62" fill="#f5cf84"/><circle cx="739.6" cy="363.9" r="2.62" fill="#e0482f"/><circle cx="747.4" cy="364.1" r="2.62" fill="#fdf6c4"/><circle cx="766.1" cy="363.0" r="2.62" fill="#fdf6c4"/><circle cx="720.8" cy="367.9" r="2.62" fill="#f5cf84"/><circle cx="724.2" cy="368.5" r="2.62" fill="#fdf6c4"/><circle cx="803.4" cy="362.6" r="2.62" fill="#fdf6c4"/><circle cx="796.2" cy="367.9" r="2.62" fill="#f5cf84"/><circle cx="697.5" cy="373.6" r="2.62" fill="#f5cf84"/><circle cx="743.4" cy="375.8" r="2.62" fill="#f5cf84"/><circle cx="776.8" cy="374.5" r="2.62" fill="#fdf6c4"/><circle cx="848.6" cy="378.6" r="2.62" fill="#f5cf84"/><circle cx="735.8" cy="386.4" r="2.62" fill="#fdf6c4"/><circle cx="758.0" cy="383.9" r="2.62" fill="#fdf6c4"/><circle cx="794.2" cy="388.6" r="2.62" fill="#fdf6c4"/><circle cx="773.2" cy="390.8" r="2.62" fill="#f0944e"/><circle cx="702.0" cy="389.8" r="2.62" fill="#f5cf84"/><circle cx="708.9" cy="395.5" r="2.62" fill="#f5cf84"/><circle cx="647.1" cy="403.6" r="2.62" fill="#fdf6c4"/><circle cx="761.5" cy="398.5" r="2.62" fill="#fdf6c4"/><circle cx="776.4" cy="400.4" r="2.62" fill="#f5cf84"/><circle cx="793.2" cy="402.0" r="2.62" fill="#fdf6c4"/><circle cx="811.2" cy="402.2" r="2.62" fill="#fdf6c4"/><circle cx="843.2" cy="397.9" r="2.62" fill="#f5cf84"/><circle cx="748.6" cy="410.1" r="2.62" fill="#f5cf84"/><circle cx="758.6" cy="410.1" r="2.62" fill="#f5cf84"/><circle cx="492.4" cy="419.5" r="2.62" fill="#f5cf84"/><circle cx="454.2" cy="427.2" r="2.62" fill="#fdf6c4"/><circle cx="522.4" cy="426.0" r="2.62" fill="#fdf6c4"/><circle cx="546.8" cy="424.1" r="2.62" fill="#f5cf84"/><circle cx="598.4" cy="417.2" r="2.62" fill="#f5cf84"/><circle cx="551.1" cy="446.1" r="2.62" fill="#fdf6c4"/><circle cx="465.1" cy="476.4" r="2.62" fill="#fdf6c4"/><circle cx="477.6" cy="477.0" r="2.62" fill="#f5cf84"/><circle cx="641.1" cy="477.6" r="2.62" fill="#e0482f"/><circle cx="641.1" cy="481.4" r="2.62" fill="#f0944e"/><circle cx="506.1" cy="493.9" r="2.62" fill="#f5cf84"/><circle cx="468.9" cy="505.1" r="2.62" fill="#fdf6c4"/><circle cx="637.1" cy="497.0" r="2.62" fill="#f5cf84"/><circle cx="451.5" cy="517.6" r="2.62" fill="#f5cf84"/><circle cx="459.2" cy="517.6" r="2.62" fill="#f5cf84"/><circle cx="463.0" cy="524.1" r="2.62" fill="#f5cf84"/><circle cx="477.2" cy="519.8" r="2.62" fill="#f5cf84"/><circle cx="467.4" cy="530.4" r="2.62" fill="#f0944e"/><circle cx="504.9" cy="516.0" r="2.62" fill="#fdf6c4"/><circle cx="527.0" cy="518.5" r="2.62" fill="#fdf6c4"/><circle cx="491.1" cy="524.5" r="2.62" fill="#fdf6c4"/><circle cx="489.2" cy="526.4" r="2.62" fill="#fdf6c4"/><circle cx="532.0" cy="530.1" r="2.62" fill="#fdf6c4"/><circle cx="531.8" cy="535.8" r="2.62" fill="#f5cf84"/><circle cx="633.6" cy="519.8" r="2.62" fill="#f5cf84"/><circle cx="633.0" cy="533.2" r="2.62" fill="#f5cf84"/><circle cx="633.2" cy="540.8" r="2.62" fill="#f5cf84"/><circle cx="456.8" cy="537.6" r="2.62" fill="#f5cf84"/><circle cx="475.5" cy="538.6" r="2.62" fill="#fdf6c4"/><circle cx="473.6" cy="543.6" r="2.62" fill="#fdf6c4"/><circle cx="501.5" cy="538.9" r="2.62" fill="#f5cf84"/><circle cx="507.4" cy="543.5" r="2.62" fill="#fdf6c4"/><circle cx="497.6" cy="546.4" r="2.62" fill="#fdf6c4"/><circle cx="703.0" cy="417.0" r="2.62" fill="#fdf6c4"/><circle cx="707.0" cy="413.2" r="2.62" fill="#f5cf84"/><circle cx="724.0" cy="413.9" r="2.62" fill="#f0944e"/><circle cx="718.9" cy="421.4" r="2.62" fill="#f5cf84"/><circle cx="728.6" cy="420.1" r="2.62" fill="#f5cf84"/><circle cx="689.5" cy="433.2" r="2.62" fill="#f5cf84"/><circle cx="717.8" cy="435.5" r="2.62" fill="#f5cf84"/><circle cx="746.5" cy="439.5" r="2.62" fill="#f5cf84"/><circle cx="773.4" cy="418.5" r="2.62" fill="#fdf6c4"/><circle cx="789.9" cy="427.2" r="2.62" fill="#f5cf84"/><circle cx="809.0" cy="427.2" r="2.62" fill="#f5cf84"/><circle cx="816.5" cy="421.4" r="2.62" fill="#f5cf84"/><circle cx="827.4" cy="416.8" r="2.62" fill="#f5cf84"/><circle cx="851.5" cy="424.1" r="2.62" fill="#fdf6c4"/><circle cx="849.0" cy="430.8" r="2.62" fill="#fdf6c4"/><circle cx="850.5" cy="439.8" r="2.62" fill="#fdf6c4"/><circle cx="811.8" cy="434.2" r="2.62" fill="#fdf6c4"/><circle cx="824.5" cy="434.8" r="2.62" fill="#f5cf84"/><circle cx="788.0" cy="448.2" r="2.62" fill="#f5cf84"/><circle cx="809.5" cy="445.1" r="2.62" fill="#fdf6c4"/><circle cx="820.5" cy="446.8" r="2.62" fill="#f5cf84"/><circle cx="822.0" cy="450.1" r="2.62" fill="#f5cf84"/><circle cx="712.8" cy="509.9" r="2.62" fill="#f5cf84"/><circle cx="718.6" cy="509.1" r="2.62" fill="#f5cf84"/><circle cx="670.2" cy="528.0" r="2.62" fill="#f5cf84"/><circle cx="704.0" cy="525.1" r="2.62" fill="#fdf6c4"/><circle cx="739.0" cy="530.4" r="2.62" fill="#f5cf84"/><circle cx="742.8" cy="537.0" r="2.62" fill="#f5cf84"/><circle cx="728.4" cy="539.5" r="2.62" fill="#fdf6c4"/><circle cx="688.6" cy="546.4" r="2.62" fill="#f5cf84"/><circle cx="471.5" cy="549.8" r="2.62" fill="#fdf6c4"/><circle cx="525.2" cy="551.8" r="2.62" fill="#f5cf84"/><circle cx="470.0" cy="558.2" r="2.62" fill="#f0944e"/><circle cx="491.2" cy="557.0" r="2.62" fill="#f5cf84"/><circle cx="427.0" cy="565.8" r="2.62" fill="#fdf6c4"/><circle cx="468.9" cy="567.0" r="2.62" fill="#fdf6c4"/><circle cx="477.2" cy="573.0" r="2.62" fill="#fdf6c4"/><circle cx="457.0" cy="579.2" r="2.62" fill="#fdf6c4"/><circle cx="463.1" cy="582.0" r="2.62" fill="#f5cf84"/><circle cx="511.5" cy="575.4" r="2.62" fill="#f5cf84"/><circle cx="503.8" cy="588.2" r="2.62" fill="#f5cf84"/><circle cx="522.8" cy="586.0" r="2.62" fill="#f5cf84"/><circle cx="484.9" cy="594.9" r="2.62" fill="#f0944e"/><circle cx="503.8" cy="595.8" r="2.62" fill="#fdf6c4"/><circle cx="541.1" cy="570.8" r="2.62" fill="#f5cf84"/><circle cx="540.1" cy="575.1" r="2.62" fill="#f0944e"/><circle cx="540.2" cy="582.9" r="2.62" fill="#f5cf84"/><circle cx="568.2" cy="563.2" r="2.62" fill="#fdf6c4"/><circle cx="570.2" cy="573.0" r="2.62" fill="#f5cf84"/><circle cx="612.1" cy="555.1" r="2.62" fill="#f5cf84"/><circle cx="618.0" cy="555.1" r="2.62" fill="#fdf6c4"/><circle cx="601.1" cy="572.9" r="2.62" fill="#fdf6c4"/><circle cx="603.6" cy="580.8" r="2.62" fill="#f0944e"/><circle cx="609.2" cy="585.8" r="2.62" fill="#f5cf84"/><circle cx="630.8" cy="578.2" r="2.62" fill="#fdf6c4"/><circle cx="555.2" cy="595.1" r="2.62" fill="#f5cf84"/><circle cx="578.5" cy="592.6" r="2.62" fill="#f5cf84"/><circle cx="571.1" cy="602.0" r="2.62" fill="#f5cf84"/><circle cx="578.6" cy="607.0" r="2.62" fill="#f0944e"/><circle cx="590.1" cy="608.5" r="2.62" fill="#f5cf84"/><circle cx="626.8" cy="597.9" r="2.62" fill="#fdf6c4"/><circle cx="642.0" cy="594.2" r="2.62" fill="#fdf6c4"/><circle cx="523.6" cy="601.8" r="2.62" fill="#fdf6c4"/><circle cx="523.0" cy="606.8" r="2.62" fill="#fdf6c4"/><circle cx="534.6" cy="608.6" r="2.62" fill="#f5cf84"/><circle cx="520.5" cy="615.4" r="2.62" fill="#f5cf84"/><circle cx="547.4" cy="614.9" r="2.62" fill="#f5cf84"/><circle cx="549.9" cy="618.6" r="2.62" fill="#f5cf84"/><circle cx="443.0" cy="605.8" r="2.62" fill="#f5cf84"/><circle cx="607.0" cy="617.2" r="2.62" fill="#f5cf84"/><circle cx="599.9" cy="621.4" r="2.62" fill="#f0944e"/><circle cx="601.4" cy="626.4" r="2.62" fill="#f5cf84"/><circle cx="625.5" cy="618.5" r="2.62" fill="#fdf6c4"/><circle cx="632.8" cy="625.8" r="2.62" fill="#f5cf84"/><circle cx="571.8" cy="628.0" r="2.62" fill="#f5cf84"/><circle cx="589.2" cy="631.5" r="2.62" fill="#f0944e"/><circle cx="490.1" cy="631.1" r="2.62" fill="#f5cf84"/><circle cx="492.1" cy="641.4" r="2.62" fill="#fdf6c4"/><circle cx="509.0" cy="644.5" r="2.62" fill="#f5cf84"/><circle cx="520.9" cy="638.9" r="2.62" fill="#f5cf84"/><circle cx="605.1" cy="640.8" r="2.62" fill="#f5cf84"/><circle cx="595.1" cy="644.2" r="2.62" fill="#f5cf84"/><circle cx="613.0" cy="642.6" r="2.62" fill="#fdf6c4"/><circle cx="633.6" cy="638.9" r="2.62" fill="#fdf6c4"/><circle cx="632.4" cy="647.6" r="2.62" fill="#fdf6c4"/><circle cx="563.4" cy="651.0" r="2.62" fill="#f5cf84"/><circle cx="587.6" cy="652.0" r="2.62" fill="#f5cf84"/><circle cx="549.9" cy="657.0" r="2.62" fill="#f5cf84"/><circle cx="569.2" cy="658.9" r="2.62" fill="#fdf6c4"/><circle cx="624.5" cy="656.4" r="2.62" fill="#f5cf84"/><circle cx="562.0" cy="668.9" r="2.62" fill="#f0944e"/><circle cx="565.1" cy="670.1" r="2.62" fill="#fdf6c4"/><circle cx="570.2" cy="669.1" r="2.62" fill="#f5cf84"/><circle cx="579.2" cy="667.2" r="2.62" fill="#f5cf84"/><circle cx="590.5" cy="665.8" r="2.62" fill="#fdf6c4"/><circle cx="601.1" cy="665.8" r="2.62" fill="#f5cf84"/><circle cx="608.4" cy="670.1" r="2.62" fill="#f5cf84"/><circle cx="547.8" cy="672.0" r="2.62" fill="#f5cf84"/><circle cx="546.1" cy="678.2" r="2.62" fill="#f5cf84"/><circle cx="580.8" cy="676.8" r="2.62" fill="#f5cf84"/><circle cx="611.1" cy="678.9" r="2.62" fill="#fdf6c4"/><circle cx="556.5" cy="681.0" r="2.62" fill="#e0482f"/><circle cx="705.5" cy="552.2" r="2.62" fill="#f5cf84"/><circle cx="652.8" cy="569.2" r="2.62" fill="#fdf6c4"/><circle cx="666.4" cy="570.5" r="2.62" fill="#f5cf84"/><circle cx="694.5" cy="578.2" r="2.62" fill="#f5cf84"/><circle cx="724.5" cy="573.5" r="2.62" fill="#fdf6c4"/><circle cx="672.1" cy="589.8" r="2.62" fill="#fdf6c4"/><circle cx="676.5" cy="594.1" r="2.62" fill="#fdf6c4"/><circle cx="652.8" cy="593.2" r="2.62" fill="#fdf6c4"/><circle cx="765.1" cy="597.0" r="2.62" fill="#f0944e"/><circle cx="717.2" cy="604.5" r="2.62" fill="#f5cf84"/><circle cx="671.5" cy="607.6" r="2.62" fill="#f5cf84"/><circle cx="657.4" cy="611.8" r="2.62" fill="#f5cf84"/><circle cx="697.5" cy="617.0" r="2.62" fill="#f5cf84"/><circle cx="697.8" cy="622.6" r="2.62" fill="#e0482f"/><circle cx="741.4" cy="623.5" r="2.62" fill="#fdf6c4"/><circle cx="664.0" cy="630.8" r="2.62" fill="#f5cf84"/><circle cx="780.9" cy="634.5" r="2.62" fill="#f0944e"/><circle cx="668.4" cy="641.4" r="2.62" fill="#f5cf84"/><circle cx="684.2" cy="640.4" r="2.62" fill="#f5cf84"/><circle cx="730.1" cy="638.6" r="2.62" fill="#fdf6c4"/><circle cx="749.5" cy="641.8" r="2.62" fill="#f5cf84"/><circle cx="694.9" cy="647.0" r="2.62" fill="#f5cf84"/><circle cx="711.8" cy="649.2" r="2.62" fill="#fdf6c4"/><circle cx="676.4" cy="654.2" r="2.62" fill="#fdf6c4"/><circle cx="816.8" cy="658.2" r="2.62" fill="#f5cf84"/><circle cx="663.6" cy="663.9" r="2.62" fill="#fdf6c4"/><circle cx="693.9" cy="665.8" r="2.62" fill="#f5cf84"/><circle cx="722.0" cy="662.0" r="2.62" fill="#f5cf84"/><circle cx="756.4" cy="663.6" r="2.62" fill="#f5cf84"/><circle cx="775.9" cy="663.0" r="2.62" fill="#f0944e"/><circle cx="761.8" cy="669.5" r="2.62" fill="#f5cf84"/><circle cx="646.1" cy="668.2" r="2.62" fill="#f5cf84"/><circle cx="673.4" cy="673.2" r="2.62" fill="#f5cf84"/><circle cx="668.2" cy="675.1" r="2.62" fill="#fdf6c4"/><circle cx="470.5" cy="689.2" r="2.62" fill="#f5cf84"/><circle cx="531.4" cy="684.8" r="2.62" fill="#f5cf84"/><circle cx="581.1" cy="686.0" r="2.62" fill="#f5cf84"/><circle cx="598.6" cy="687.0" r="2.62" fill="#fdf6c4"/><circle cx="561.8" cy="689.8" r="2.62" fill="#f5cf84"/><circle cx="622.4" cy="692.9" r="2.62" fill="#f5cf84"/><circle cx="600.9" cy="696.4" r="2.62" fill="#f5cf84"/><circle cx="610.1" cy="701.4" r="2.62" fill="#f5cf84"/><circle cx="641.5" cy="683.5" r="2.62" fill="#f0944e"/><circle cx="642.0" cy="703.2" r="2.62" fill="#f5cf84"/><circle cx="565.5" cy="707.2" r="2.62" fill="#f5cf84"/><circle cx="591.4" cy="706.6" r="2.62" fill="#f5cf84"/><circle cx="576.1" cy="711.4" r="2.62" fill="#f5cf84"/><circle cx="617.0" cy="713.2" r="2.62" fill="#f5cf84"/><circle cx="628.6" cy="715.5" r="2.62" fill="#f5cf84"/><circle cx="491.1" cy="715.8" r="2.62" fill="#f5cf84"/><circle cx="495.1" cy="719.2" r="2.62" fill="#fdf6c4"/><circle cx="506.5" cy="725.5" r="2.62" fill="#f0944e"/><circle cx="535.2" cy="725.1" r="2.62" fill="#f5cf84"/><circle cx="542.4" cy="727.6" r="2.62" fill="#f5cf84"/><circle cx="555.9" cy="726.0" r="2.62" fill="#fdf6c4"/><circle cx="558.6" cy="728.0" r="2.62" fill="#f5cf84"/><circle cx="593.6" cy="721.4" r="2.62" fill="#fdf6c4"/><circle cx="615.9" cy="728.2" r="2.62" fill="#f5cf84"/><circle cx="635.9" cy="730.5" r="2.62" fill="#f5cf84"/><circle cx="600.1" cy="739.5" r="2.62" fill="#f5cf84"/><circle cx="618.4" cy="738.2" r="2.62" fill="#f5cf84"/><circle cx="625.5" cy="738.9" r="2.62" fill="#f5cf84"/><circle cx="540.5" cy="751.6" r="2.62" fill="#f5cf84"/><circle cx="571.8" cy="753.0" r="2.62" fill="#f5cf84"/><circle cx="630.8" cy="756.4" r="2.62" fill="#f5cf84"/><circle cx="596.8" cy="770.1" r="2.62" fill="#f5cf84"/><circle cx="538.0" cy="772.9" r="2.62" fill="#f5cf84"/><circle cx="590.5" cy="779.5" r="2.62" fill="#f5cf84"/><circle cx="614.2" cy="802.9" r="2.62" fill="#f5cf84"/><circle cx="625.5" cy="801.6" r="2.62" fill="#f0944e"/></svg>
<div class="abs" style="left:401px;top:162px;width:654px;height:54px;background:#2a2a2e;border-radius:7px"></div>
<svg style="left:410px;top:170px;" width="40" height="40" viewBox="0 0 40 40"><g stroke="#8b929b" stroke-width="1.5" fill="none"><path d="M9.6 12L17.3 8 20.5 16 9.6 12M20.5 16L30.7 12 26 25.5 20.5 16 13.5 29 26 25.5"/></g><g fill="#8b929b"><circle cx="9.6" cy="12" r="2.2"/><circle cx="17.3" cy="8" r="2"/><circle cx="30.7" cy="12" r="2.2"/><circle cx="20.5" cy="16" r="2.6"/><circle cx="13.5" cy="29" r="2.2"/><circle cx="26" cy="25.5" r="1.6"/></g></svg>
<div class="t" style="left:453.61px;letter-spacing:-0.313px;top:179.05px;font-size:21.8px;color:#8f969f;font-weight:normal;font-style:normal;">Cluster</div>
<svg style="left:550px;top:170px;" width="40" height="40" viewBox="0 0 40 40"><circle cx="18.5" cy="8.7" r="1.8" fill="#8b929b"/><circle cx="23.5" cy="10.4" r="1.8" fill="#8b929b"/><circle cx="28.7" cy="8.7" r="1.8" fill="#8b929b"/><circle cx="28.7" cy="13.9" r="1.8" fill="#8b929b"/><circle cx="21.8" cy="15.5" r="1.8" fill="#8b929b"/><circle cx="8.1" cy="19.0" r="1.8" fill="#8b929b"/><circle cx="13.3" cy="17.3" r="1.8" fill="#8b929b"/><circle cx="13.3" cy="22.4" r="1.8" fill="#8b929b"/><circle cx="8.1" cy="25.8" r="1.8" fill="#8b929b"/><circle cx="13.3" cy="29.3" r="1.8" fill="#8b929b"/><circle cx="23.5" cy="22.4" r="1.8" fill="#8b929b"/><circle cx="28.7" cy="24.1" r="1.8" fill="#8b929b"/><circle cx="21.8" cy="27.6" r="1.8" fill="#8b929b"/><circle cx="27.0" cy="29.3" r="1.8" fill="#8b929b"/></svg>
<div class="t" style="left:592.32px;letter-spacing:-0.348px;top:179.05px;font-size:21.8px;color:#8f969f;font-weight:normal;font-style:normal;">Scatter</div>
<svg style="left:688px;top:170px;" width="40" height="40" viewBox="0 0 40 40"><g stroke="#8b929b" stroke-width="1.4" fill="none"><path d="M15 8H30.2L25.5 16.5H9.3Z"/><path d="M14 21.5H29L24 30H8Z"/><path d="M19.5 16.5V26M16 24L19.5 27 23 24"/></g><g fill="#8b929b"><rect x="15.5" y="10" width="2.5" height="1.5"/><rect x="21" y="10.8" width="4.5" height="1.4"/><rect x="15.5" y="13" width="4" height="1.6"/></g></svg>
<div class="t" style="left:730.76px;letter-spacing:-0.261px;top:179.05px;font-size:21.8px;color:#8f969f;font-weight:normal;font-style:normal;">Predict cell type</div>
<svg style="left:908px;top:170px;" width="40" height="40" viewBox="0 0 40 40"><g stroke="#46464c" stroke-width="1.4" fill="none"><path d="M9 26L22.2 12V26M13.5 20.8H22.2M27.3 8.5V29.5M24 8.5H30M24 29.5H31"/></g></svg>
<div class="t" style="left:953.00px;letter-spacing:-0.431px;top:179.05px;font-size:21.8px;color:#55555b;font-weight:normal;font-style:normal;">Annotate</div>
<div class="abs" style="left:401px;top:223px;width:54px;height:53px;background:#2a2a2e;border-radius:6px"></div>
<svg style="left:400px;top:222px;" width="56" height="56" viewBox="0 0 56 56"><path d="M26 34.5C22 34.5 18 34 16.5 31.5C15 29 17 25.5 19 22.5C20 20 19.5 18 21.5 16.5C24 14.5 28.5 14.5 31.5 16.5C34.5 18.5 36.5 22.5 37.3 26.5" fill="none" stroke="#8b929b" stroke-width="1.3" stroke-dasharray="2.3 1.9"/><path d="M28 25.1L38.9 32.7 31.4 33.7 28 38.4Z" fill="#8b929b"/></svg>
<div class="abs" style="left:401px;top:282px;width:54px;height:270px;background:#2a2a2e;border-radius:6px"></div>
<svg style="left:400px;top:282px;" width="56" height="56" viewBox="0 0 56 56"><circle cx="24.4" cy="24" r="7.6" fill="none" stroke="#8b929b" stroke-width="1.3"/><path d="M29.8 29.6L38.6 38.2" stroke="#8b929b" stroke-width="1.4"/><path d="M24.4 19.8V28.2M20.2 24H28.6" stroke="#8b929b" stroke-width="1.4"/></svg>
<svg style="left:400px;top:336px;" width="56" height="56" viewBox="0 0 56 56"><circle cx="24.4" cy="24" r="7.6" fill="none" stroke="#8b929b" stroke-width="1.3"/><path d="M29.8 29.6L38.6 38.2" stroke="#8b929b" stroke-width="1.4"/><path d="M20.2 24H28.6" stroke="#8b929b" stroke-width="1.4"/></svg>
<svg style="left:400px;top:390px;" width="56" height="56" viewBox="0 0 56 56"><path d="M18.5 20.5A7.6 7.6 0 1 1 17.2 27" fill="none" stroke="#8b929b" stroke-width="1.3"/><path d="M17.6 15.5V21H23" fill="none" stroke="#8b929b" stroke-width="1.3"/><path d="M29.8 29.6L38.6 38.2" stroke="#8b929b" stroke-width="1.4"/></svg>
<svg style="left:400px;top:445px;" width="56" height="60" viewBox="0 0 56 60"><g stroke="#8b929b" stroke-width="1.3" fill="none"><path d="M16 18H39M16 26H39M16 33.7H39"/></g><g fill="#8b929b"><rect x="20.9" y="15.8" width="4.3" height="4.4"/><rect x="30" y="23.8" width="4.2" height="4.6"/><rect x="20.9" y="31.4" width="4.3" height="4.6"/></g><g fill="#2a2a2e"><rect x="22.6" y="17" width="0.9" height="2"/><rect x="31.6" y="25" width="0.9" height="2.2"/><rect x="22.6" y="32.6" width="0.9" height="2.2"/></g></svg>
<svg style="left:400px;top:500px;" width="56" height="60" viewBox="0 0 56 60"><path d="M25 33.3H16.9V14.7H37.3V28" fill="none" stroke="#8b929b" stroke-width="1.3"/><path d="M20 28.6L24.8 19.4 28.2 22.8 31.1 20.8 35 22.8" fill="none" stroke="#8b929b" stroke-width="1.3"/><path d="M33.5 25.7V35.9M28.2 31.6L33.5 35.9 38.9 31.6" fill="none" stroke="#8b929b" stroke-width="1.3"/></svg>
<div class="abs" style="left:1220px;top:162px;width:300px;height:168px;background:#2a2a2e;border-radius:8px"></div>
<div class="t" style="left:1230.06px;letter-spacing:0.068px;top:173.76px;font-size:18px;color:#f2f2f2;font-weight:normal;font-style:normal;">Number of expressed rna</div>
<svg style="left:1480px;top:172px;" width="30" height="28" viewBox="0 0 30 28"><path d="M17.4 22.2A8.3 8.3 0 1 0 8.95 14.8L8.6 20.6" fill="none" stroke="#f2f2f2" stroke-width="1.5"/><path d="M4.5 16.5L8.6 20.8 12.8 16.5" fill="none" stroke="#f2f2f2" stroke-width="1.5"/></svg>
<svg style="left:1220px;top:162px;" width="300" height="168" viewBox="0 0 300 168"><rect x="11.50" y="64.00" width="25.12" height="62.00" fill="#ffffd3"/><rect x="36.62" y="49.00" width="25.12" height="77.00" fill="#fbefad"/><rect x="36.32" y="49.00" width="0.6" height="77.00" fill="#000" opacity="0.12"/><rect x="61.74" y="69.00" width="25.12" height="57.00" fill="#f7e08e"/><rect x="61.44" y="69.00" width="0.6" height="57.00" fill="#000" opacity="0.12"/><rect x="86.85" y="90.00" width="25.12" height="36.00" fill="#f3c976"/><rect x="86.55" y="90.00" width="0.6" height="36.00" fill="#000" opacity="0.12"/><rect x="111.97" y="99.00" width="25.12" height="27.00" fill="#efad5d"/><rect x="111.67" y="99.00" width="0.6" height="27.00" fill="#000" opacity="0.12"/><rect x="137.09" y="110.00" width="25.12" height="16.00" fill="#eb9451"/><rect x="136.79" y="110.00" width="0.6" height="16.00" fill="#000" opacity="0.12"/><rect x="162.21" y="108.00" width="25.12" height="18.00" fill="#e8683f"/><rect x="161.91" y="108.00" width="0.6" height="18.00" fill="#000" opacity="0.12"/><rect x="187.33" y="109.00" width="25.12" height="17.00" fill="#d84531"/><rect x="187.03" y="109.00" width="0.6" height="17.00" fill="#000" opacity="0.12"/><rect x="212.45" y="115.00" width="25.12" height="11.00" fill="#c12b2a"/><rect x="212.15" y="115.00" width="0.6" height="11.00" fill="#000" opacity="0.12"/><rect x="237.56" y="115.50" width="25.12" height="10.50" fill="#9e2130"/><rect x="237.26" y="115.50" width="0.6" height="10.50" fill="#000" opacity="0.12"/><rect x="262.68" y="121.00" width="25.12" height="5.00" fill="#731a2c"/><rect x="262.38" y="121.00" width="0.6" height="5.00" fill="#000" opacity="0.12"/><rect x="11.5" y="125.5" width="276.3" height="2.2" fill="#f4f4f4"/></svg>
<div class="t" style="left:1231.35px;letter-spacing:0.000px;top:296.95px;font-size:14px;color:#f2f2f2;font-weight:normal;font-style:normal;">1</div>
<div class="t" style="left:1491.95px;letter-spacing:-0.010px;top:296.95px;font-size:14px;color:#f2f2f2;font-weight:normal;font-style:normal;">11</div>
<div class="abs" style="left:0;top:0;width:1920px;height:1080px;border:2px solid #dbe2ea;border-radius:10px;box-shadow:0 0 0 30px #000;z-index:50"></div>
</body></html>
